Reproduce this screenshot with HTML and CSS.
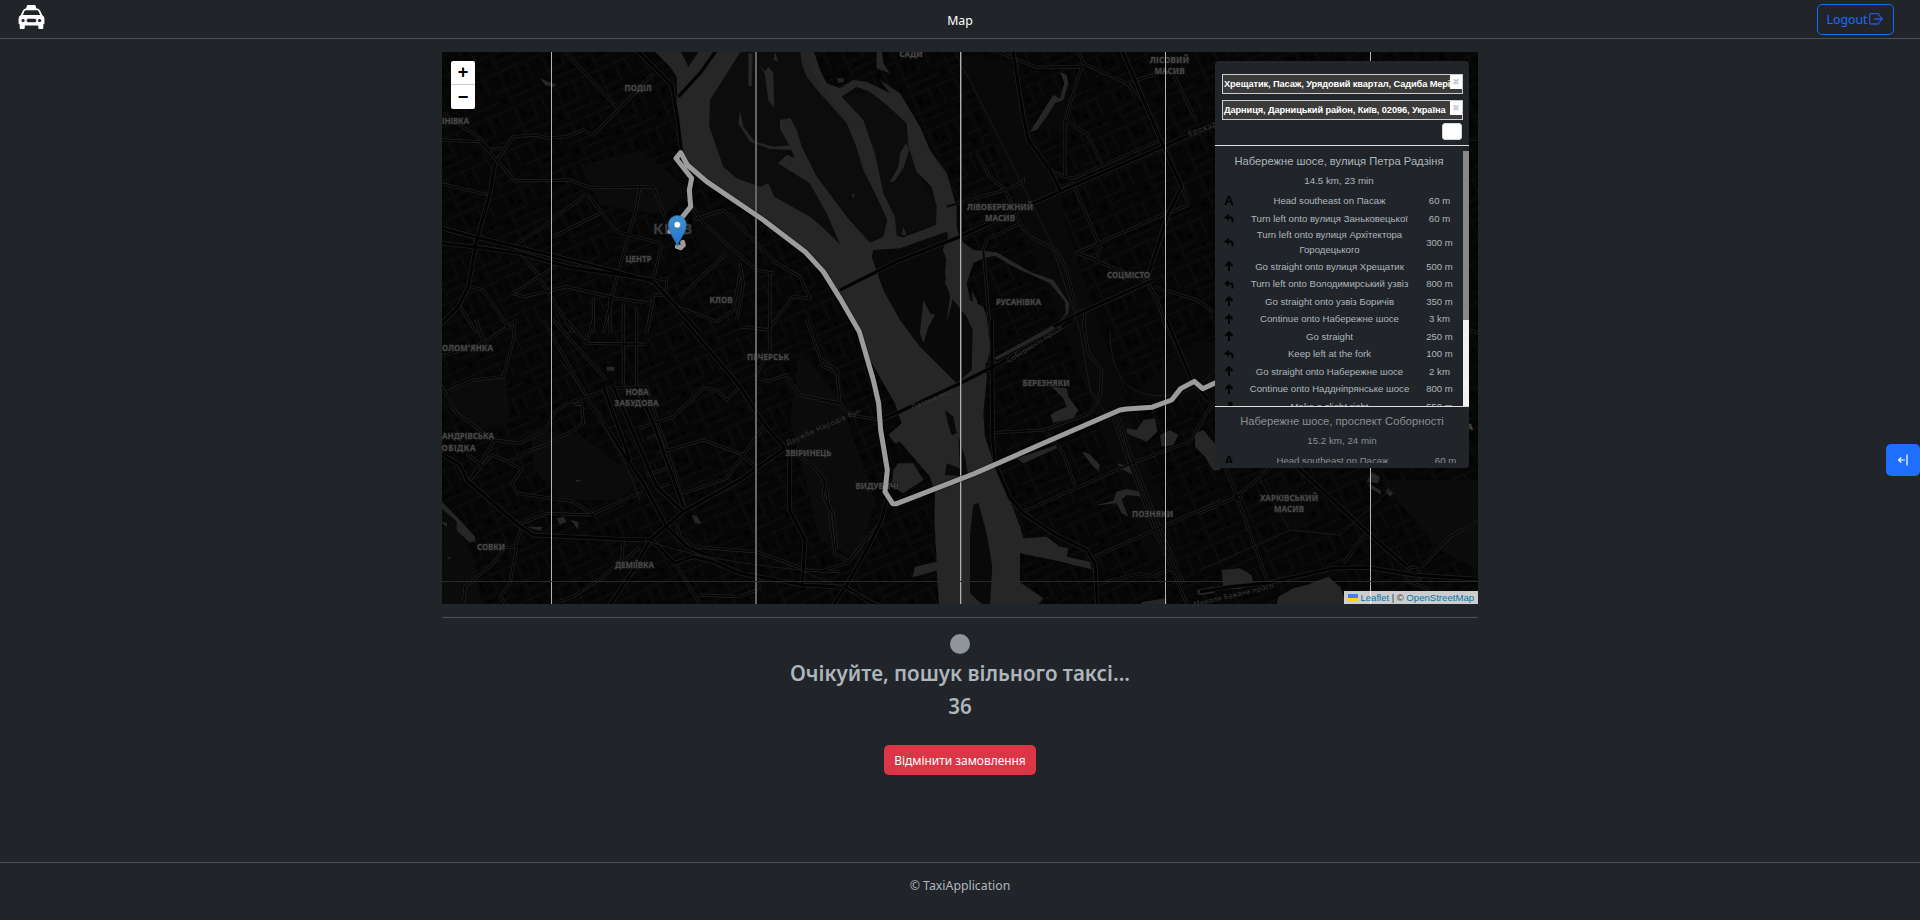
FILE: index.html
```html
<!DOCTYPE html>
<html lang="uk">
<head>
<meta charset="utf-8">
<title>Map</title>
<link rel="stylesheet" href="styles.css">
</head>
<body>
<header class="navbar">
  <a class="brand" href="#" aria-label="Taxi">
    <svg width="27" height="25" viewBox="0 0 24 25" preserveAspectRatio="none"><path fill="#fff" fill-rule="evenodd" d="M8 .5Q8 0 8.500 0H15q.5 0 .6.5L16.300 3.300Q18.800 3.600 19.600 5.500L21.500 10Q23.500 11 23.500 14V18.500L22.500 19.500V23q0 1-1 1H19q-1 0-1-1V20.500H6V23q0 1-1 1H2.500q-1 0-1-1V19.500L.5 18.500V14q0-3 2-4L4.400 5.500Q5.200 3.600 7.300 3.300ZM6.800 5.300Q6 5.400 5.600 6.500L4.300 10H19.700L18.400 6.500Q18 5.400 17.200 5.300ZM4.500 14a1.500 1.500 0 1 0 0 3 1.500 1.500 0 0 0 0-3ZM19.200 14a1.500 1.500 0 1 0 0 3 1.500 1.500 0 0 0 0-3ZM8.500 13.800L7.500 15.500 8.500 17.200H15.500L16.500 15.500 15.500 13.800Z"/></svg>
  </a>
  <span class="nav-title">Map</span>
  <a class="logout" href="#"><span>Logout</span>
    <svg width="15" height="12" viewBox="0 0 15 12" fill="none" stroke="#2455d6" stroke-width="1.300"><path d="M10 3.500V2Q10 .7 8.700 .7H2Q.7 .7 .7 2V9.700Q.7 11 2 11H8.700Q10 11 10 9.700V8.300M5 6H13.500M11 3.500L13.500 6L11 8.500"/></svg>
  </a>
</header>

<main class="content">
  <section class="map">
    <svg class="tiles" width="1036" height="552" viewBox="442 52 1036 552">
      <defs>
        <pattern id="trees" width="3" height="3" patternUnits="userSpaceOnUse"><path d="M0 .5H1M1.500 2H2.500" stroke="#111" stroke-width="1"/></pattern>
        <pattern id="blocks" width="46" height="38" patternUnits="userSpaceOnUse" patternTransform="rotate(-24)"><path d="M0 3H46M0 22H30M12 3V38M30 0V22M41 3V22M12 31H46" stroke="#121212" stroke-width=".8" fill="none"/><path d="M3 7h5v2h-5zM16 7h3v8h-3zM23 14h4v3h-4zM34 8h4v3h-4zM17 26h7v2h-7zM33 26h3v4h-3zM3 28h4v5h-4z" fill="#020202"/></pattern>
        <g id="main-roads" fill="none" stroke-linejoin="round">
          <g transform="translate(440 50) scale(.33333)">
            <path d="M0 533L100 560 310 610 530 665 640 695M0 580L100 590 240 610 380 650 640 690M165 340L150 430 110 570 85 710 55 770 0 825M640 695L700 760 780 850M590 0L695 105 712 200 725 310"/>
            <path d="M830 0L780 70 715 140"/>
          </g>
          <g transform="translate(440 320) scale(.33333)">
            <path d="M730 0L900 200 970 310 1035 385M1035 385L900 480 730 575 630 660 580 750 510 855M0 400L60 435 80 480 235 615 280 645 550 658 635 660 705 730 760 710 820 725 900 760 1090 795 1200 800M1048 385V570L1095 660 1087 800M440 235L570 430 610 490 680 620 740 680 800 705"/>
            <path d="M490 200L570 420M520 200L650 500 730 575M590 200L640 310 730 560"/>
          </g>
          <g transform="translate(820 50) scale(.33333)">
            <path d="M60 720L230 635 420 560 640 460 730 420 1030 290 1200 215M578 0L610 200 625 270 690 360 720 420M905 0L945 90 1030 290 1085 410 1045 490 980 690M1000 690L790 785 700 830"/>
          </g>
          <g transform="translate(820 320) scale(.33333)">
            <path d="M180 300L240 275 420 190 540 130 760 0M200 540L185 600 140 690 80 795 40 855M0 798L80 803 160 852M515 0L518 360 525 430 570 535 610 580 700 640 800 690 825 730 832 852M1040 0L1115 180 1165 240"/>
          </g>
          <g transform="translate(1200 450) scale(.33333)">
            <path d="M0 425L90 410 200 400 400 355 500 352 640 375 840 388M290 50L500 245 620 350"/>
          </g>
        </g>
        <g id="side-roads" fill="none" stroke-linejoin="round">
          <g transform="translate(440 50) scale(.33333)">
            <path d="M0 270L120 275 170 330 225 393 390 390 450 413 640 410 675 500M0 185L120 265 150 300 190 295M165 340L220 260 290 255 320 265 380 260 430 240 460 255 640 70M370 0L530 170M0 400L145 435M440 430L530 545 665 580M340 560L480 490M230 600V580L310 530 440 430M600 410L590 470 535 665 490 850M665 580L640 690M640 695L680 685 680 735 640 735M240 610L290 670 400 850M220 730L360 640M220 730L250 740 380 710 530 745 630 760M90 710L130 720 210 840M60 770L110 850M460 740V850M510 740V850M550 760V850M590 770V850M640 740L620 850M760 510L850 480 900 530 960 590 1010 640 1080 680 1110 745 1060 740 990 830M740 440L780 510 880 600 950 660 1000 670M860 610L720 740M900 640L910 700 890 810M710 770L830 815 880 780 900 670M990 670V840"/>
          </g>
          <g transform="translate(440 320) scale(.33333)">
            <path d="M110 0L130 70 0 110M225 0L220 60 190 170 100 180 20 215M230 0L130 70M0 190L50 280 160 360 240 370 320 330 340 280 380 250 520 205 620 200 740 575M310 0L440 230M340 0L500 180M380 0L440 70 620 73M440 70L460 0M550 0V200M590 0V200M400 255L425 250 430 310 400 330 320 375 270 390 205 425 155 405 90 480M205 425L245 450 215 490 235 520 400 545 460 585M235 615L320 580 450 585 610 515M165 360L90 480M80 400L130 440M180 685L225 680 245 620M190 690L150 740 75 800 70 855M230 680L210 790 180 830 200 855M600 325L700 290 790 205 830 210 860 240 900 200M650 400L790 360 900 400 945 440M730 520L860 475 970 320M620 355L650 345M620 465L680 445M650 505L690 490M945 170L980 185 1040 165 1080 225 1200 250M990 0V90L945 170M900 20L990 30M1100 0L1150 140 1200 160M1060 400L1110 430 1155 480 1150 530 1180 580 1190 690M710 610L720 650 760 680 950 695 1100 750 1200 755M550 660L545 720 490 770 400 830 340 850M705 730L780 852M780 825L900 830 950 810 970 775M600 680L545 730"/>
          </g>
          <g transform="translate(820 50) scale(.33333)">
            <path d="M520 0L650 52 785 50M775 0L790 40 920 100 1000 75M920 100L970 150 1030 290M785 50L735 210 735 380 690 360M735 210L800 250 845 340M735 380L760 385 1020 270M720 420L760 400 840 590 830 630 770 608 1040 490M770 608L980 695M1085 410L1105 465 1045 490M1060 70L1130 215M470 310L510 380 555 420 590 490 600 520 630 560 710 600 740 660 770 780 795 785 790 840M380 470L555 420 610 395M610 395V380M600 520L500 570 490 600 510 840M980 695L1010 740 1040 840M1000 710L1130 750 1180 785"/>
          </g>
          <g transform="translate(820 320) scale(.33333)">
            <path d="M0 240L60 250 90 285 180 300M0 115L50 150 60 250M0 460L20 510 45 700 90 730M0 755L80 730 180 610M790 0L805 100 845 150 840 230 810 280 670 330 520 338M500 155V130L540 130M610 575L935 430 1110 365 1180 245M680 340L730 400 770 510M825 710L1005 630 1200 545M880 290L910 380 1000 620 1070 780 1100 852M895 290L930 400 1010 600 1090 790M840 790L960 760 1000 770 1060 745"/>
          </g>
          <g transform="translate(1200 450) scale(.33333)">
            <path d="M0 190L110 140 215 50M75 50L110 140 205 400M640 400L690 420M840 210L750 260 665 350M840 -350L810 -360M500 245L430 340"/>
            <circle cx="640" cy="375" r="24"/><circle cx="114" cy="142" r="8"/>
          </g>
        </g>
      </defs>
      <rect x="442" y="52" width="1036" height="552" fill="#060606"/>
      <rect x="442" y="52" width="1036" height="552" fill="url(#blocks)"/>
      <g fill="#090909">
        <path id="park1" d="M580 165L640 150 690 190 665 215 600 205ZM450 385L505 375 510 420 480 430 450 410ZM530 430L580 435 640 480 620 500 560 500 535 470ZM800 350L840 400 875 500 860 560 820 540 790 420ZM690 205L750 215 740 270 700 250ZM960 55L1010 60 1180 560 1150 560ZM1380 480L1478 480 1478 570 1440 550ZM1280 480L1320 500 1300 530 1270 520ZM1180 350L1215 340V400L1130 400ZM442 500L475 560 480 604 442 604ZM1070 90L1070 130 1030 130Z"/>
      </g>
      <path d="M580 165L640 150 690 190 665 215 600 205ZM450 385L505 375 510 420 480 430 450 410ZM530 430L580 435 640 480 620 500 560 500 535 470ZM800 350L840 400 875 500 860 560 820 540 790 420ZM1380 480L1478 480 1478 570 1440 550ZM442 500L475 560 480 604 442 604Z" fill="url(#trees)"/>

      <g transform="translate(440 50) scale(.33333)">
        <path fill="#262626" d="M640 0L690 50 710 80 712 200 725 270 735 330 800 395 970 510 1095 605 1150 665 1200 745 1265 840 1290 930 1365 1060 1385 1120 1345 1155 1365 1180 1380 1175 1470 1280 1485 1330 1483 1410 1490 1535 1425 1550 1418 1582 1490 1562 1497 1662H1795L1810 1645 1740 1597 1740 1510 1840 1530 1955 1558 1950 1535 1880 1520 1885 1495 1860 1490 1820 1460 1750 1465 1740 1430 1710 1350 1675 1280 1655 1220 1635 1160 1630 1090 1640 990V940L1652 900 1640 800 1630 770 1590 750 1580 700 1600 640 1630 625 1665 617 1720 650 1830 700 1875 755 1877 790 1840 840 1670 930 1660 925 1860 815 1885 790 1888 760 1840 690 1770 665 1670 607 1600 600 1560 570 1550 530V470L1520 370 1470 300 1440 230 1380 130 1320 90 1350 130 1280 95 1240 90 1200 115 1160 100 1140 60 1120 0Z"/>
        <g fill="#090909">
          <path id="isle-a" d="M905 0L810 150 808 230 850 350 890 385 960 410 985 400 1003 440 1110 500 1140 525 1200 582 1195 545 1160 490 1110 400 1015 340 1040 315 1065 325 1050 290 1020 235 1020 210 1050 205 1070 240 1085 290 1130 380 1220 500 1250 550 1290 578 1330 560 1342 510 1310 440 1270 360 1245 280 1220 220 1140 130 1100 80 1085 40 1080 0Z"/>
          <path id="isle-b" d="M1205 140L1250 110 1290 125 1340 165 1400 220 1405 290 1430 365 1475 410 1490 470 1488 525 1390 562 1370 557 1365 500 1330 430 1305 310 1270 210Z"/>
          <path d="M1300 600L1380 595 1450 570 1520 545 1525 560 1508 600 1525 640 1515 700 1540 750 1580 800 1598 840 1595 960 1550 1000 1440 890 1380 810 1330 720 1295 620ZM1515 1080L1540 1100 1550 1150 1535 1155 1525 1125ZM1555 1160L1575 1220 1585 1280 1515 1275 1520 1240 1560 1255ZM1600 1365L1615 1358 1640 1450 1657 1550 1650 1662H1625L1590 1630 1590 1450ZM720 0H780L745 50ZM1355 1240L1400 1240 1460 1285 1390 1330 1360 1290Z"/>
        </g>
        <g fill="url(#trees)">
          <path d="M905 0L810 150 808 230 850 350 890 385 960 410 985 400 1003 440 1110 500 1140 525 1200 582 1195 545 1160 490 1110 400 1015 340 1050 290 1020 235 1020 210 1050 205 1130 380 1290 578 1330 560 1342 510 1220 220 1080 0ZM1205 140L1290 125 1400 220 1430 365 1490 470 1488 525 1370 557 1270 210Z"/>
        </g>
        <g fill="#262626">
          <path d="M1020 210L1050 205 1070 240 1085 290 1130 380 1220 500 1290 578 1200 582 1160 490 1110 400 1015 340 1040 315 1065 325 1050 290 1020 235Z"/>
          <path d="M925 10H938L935 110 925 105ZM955 35L975 75 985 150 1003 175 1000 70 985 50 975 65ZM1005 5L1015 35 1000 30ZM900 180L910 230 945 275 1000 290 1060 285 1050 300 990 297 930 275 895 220ZM1310 0H1325L1330 40 1350 70 1310 55ZM1398 280L1380 310 1375 350 1350 395 1362 395 1390 355 1408 300ZM1390 530L1400 555 1385 555ZM1520 620L1540 690 1560 750 1540 740 1520 820 1530 740 1515 670ZM1450 750L1470 790 1485 795 1465 830 1450 880 1440 850ZM1595 720L1615 760 1600 765ZM1235 430L1245 435 1240 445ZM1190 85H1210L1212 95 1195 98Z"/>
          <path d="M1860 65L1880 75 1885 100 1870 150 1845 160 1820 200 1790 240 1770 245 1780 230 1830 150 1840 135 1860 145 1873 100ZM300 85L350 105 340 112 315 105Z"/>
          <path d="M1375 1240L1395 1240 1420 1240 1450 1290 1390 1330 1355 1310 1360 1260ZM1835 1010L1880 1015 1885 1040 1915 1080 1900 1105 1840 1118 1832 1095 1845 1085 1880 1070 1870 1045ZM1730 1225L1850 1185 1850 1195 1750 1240ZM1925 1205L1945 1210 1980 1245 1975 1262 1960 1250ZM2060 1135L2090 1140 2110 1110 2145 1105 2152 1145 2120 1175 2060 1150ZM2160 1155L2190 1140 2215 1155 2200 1185 2165 1190ZM2265 1150L2290 1140 2340 1200V1260L2320 1262 2295 1220 2265 1190ZM2030 1325L2060 1317 2100 1325 2110 1340 2060 1335 2045 1350 2065 1400 2045 1390 2030 1360 1960 1367 2020 1352ZM2030 1240L2075 1250 2080 1275 2050 1260ZM2270 1620L2320 1610 2320 1630 2275 1635ZM2110 1655L2180 1645 2180 1662H2100Z"/>
          <path d="M2345 1560L2400 1555 2435 1575 2440 1600 2400 1618 2350 1615ZM2280 1620L2320 1610 2322 1630 2280 1635ZM2510 1662L2515 1640 2560 1615 2600 1605 2665 1580 2700 1610 2720 1662ZM2780 1295L2795 1267 2820 1280 2815 1300ZM2785 1300L2820 1320 2825 1335 2790 1315ZM2835 1325L2845 1315 2860 1330 2850 1340Z"/>
          <path d="M0 1350L60 1410 105 1460 105 1475 85 1475 50 1440 50 1415 0 1370ZM0 1415L22 1418 20 1430ZM20 1525L35 1518 25 1530ZM350 1405L370 1400 380 1415 360 1425ZM260 1430L310 1430 300 1442ZM390 1410L415 1415 415 1440 400 1420ZM755 1395L770 1398 785 1420 765 1420ZM500 950L525 950 522 962 500 962ZM405 1288L425 1292 410 1296Z"/>
        </g>
      </g>

      <use href="#side-roads" stroke="#232323" stroke-width="9"/>
      <use href="#side-roads" stroke="#050505" stroke-width="5"/>
      <use href="#main-roads" stroke="#212121" stroke-width="13"/>
      <use href="#main-roads" stroke="#020202" stroke-width="9"/>
      <g fill="none" stroke="#191919" stroke-width="1">
        <path d="M955 52L1005 150 1050 240 1080 330 1090 390 1110 420M560 360Q620 440 640 500M645 540Q700 560 800 570L880 604M1110 330Q1110 390 1150 395T1215 370M1260 480L1290 530 1340 535 1390 490M1200 570L1290 530M1370 150L1478 140"/>
      </g>

      <g class="labels" text-anchor="middle">
        <text x="638" y="90.500" textLength="27">ПОДІЛ</text>
        <text x="455.500" y="124" textLength="27">ІНІВКА</text>
        <text class="city" x="672.500" y="233.500" textLength="39">КИЇВ</text>
        <text x="638.500" y="262" textLength="26">ЦЕНТР</text>
        <text x="721" y="303" textLength="23">КЛОВ</text>
        <text x="467.500" y="351" textLength="51">ОЛОМ'ЯНКА</text>
        <text x="768" y="360" textLength="42">ПЕЧЕРСЬК</text>
        <text x="637" y="394.500" textLength="23">НОВА</text>
        <text x="636.500" y="405.500" textLength="44">ЗАБУДОВА</text>
        <text x="468" y="439" textLength="52">АНДРІВСЬКА</text>
        <text x="458.500" y="450.500" textLength="34">ОБІДКА</text>
        <text x="808.500" y="456" textLength="46">ЗВІРИНЕЦЬ</text>
        <text x="491" y="550" textLength="28">СОВКИ</text>
        <text x="634.500" y="567.500" textLength="39">ДЕМІЇВКА</text>
        <text x="877" y="488.500" textLength="43">ВИДУБИЧІ</text>
        <text x="911" y="57" textLength="23">САДИ</text>
        <text x="1169.500" y="63" textLength="39">ЛІСОВИЙ</text>
        <text x="1169.500" y="74" textLength="30">МАСИВ</text>
        <text x="1000" y="209.500" textLength="66">ЛІВОБЕРЕЖНИЙ</text>
        <text x="1000" y="220.500" textLength="30">МАСИВ</text>
        <text x="1018.500" y="305" textLength="45">РУСАНІВКА</text>
        <text x="1128.500" y="277.500" textLength="43">СОЦМІСТО</text>
        <text x="1046" y="385.500" textLength="47">БЕРЕЗНЯКИ</text>
        <text x="1152.500" y="517" textLength="41">ПОЗНЯКИ</text>
        <text x="1289" y="500.500" textLength="58">ХАРКІВСЬКИЙ</text>
        <text x="1289" y="511.500" textLength="30">МАСИВ</text>
        <text x="1470" y="430" textLength="6">А</text>
      </g>
      <g class="street-names" text-anchor="middle">
        <text transform="translate(824 429) rotate(-24)" textLength="80">Дружби Народів бул</text>
        <text transform="translate(933 401) rotate(-23)" textLength="44">Патона міст</text>
        <text transform="translate(1036 346) rotate(-32)" textLength="64">Соборності просп</text>
        <text transform="translate(1203 131) rotate(-20)" textLength="30">Бровар</text>
        <text transform="translate(1235 597) rotate(-13)" textLength="84">Миколи Бажана просп.</text>
      </g>

      <g shape-rendering="crispEdges">
        <path fill="#b5b5b5" d="M551 52h1V604h-1zM1165 52h1V604h-1zM1370 52h1V604h-1z"/>
        <path fill="#666" d="M755 52h2V604h-2z"/>
        <path fill="#b0b0b0" d="M960 52h1V604h-1z"/>
        <path fill="#4a4a4a" d="M961 52h1V604h-1z"/>
        <path fill="#292929" d="M442 581H1478v1H442z"/>
      </g>

      <g transform="translate(440 50) scale(.33333)" fill="none" stroke-linejoin="round" stroke-linecap="round">
        <path stroke="#000" stroke-opacity=".2" stroke-width="22" d="M712 590L722 593 730 585 728 577M728 500L752 470 748 420 755 385 708 325 722 308 742 345 800 395 970 510 1095 605 1150 665 1200 745 1258 845 1300 990 1316 1060 1322 1140 1342 1260 1335 1325 1358 1361 1370 1361 1600 1272 1810 1180 2040 1080 2060 1077 2135 1072 2195 1050 2222 1016 2263 994 2288 1016 2340 992"/>
        <path stroke="#9c9c9c" stroke-width="15" d="M712 590L722 593 730 585 728 577M690 545L728 500 752 470 748 420 755 385 708 325 722 308 742 345 800 395 970 510 1095 605 1150 665 1200 745 1258 845 1300 990 1316 1060 1322 1140 1342 1260 1335 1325 1358 1361 1370 1361 1600 1272 1810 1180 2040 1080 2060 1077 2135 1072 2195 1050 2222 1016 2263 994 2288 1016 2340 992"/>
      </g>
      <linearGradient id="pin" x1="0" y1="0" x2="0" y2="1"><stop stop-color="#4391cd"/><stop offset="1" stop-color="#2273ca"/></linearGradient>
      <path fill="url(#pin)" stroke="#2d74ad" stroke-width=".7" d="M677.300 246.500C676 240 668.300 233 668.300 224.500a9 9 0 0 1 18 0C686.300 233 678.600 240 677.300 246.500Z"/>
      <circle cx="677.300" cy="224.800" r="3.300" fill="#fff" stroke="#2d74ad" stroke-width=".6"/>
    </svg>

    <div class="zoom-control"><button class="zoom-btn">+</button><button class="zoom-btn">−</button></div>

    <aside class="routing">
      <div class="waypoints">
        <div class="waypoint"><span class="place">Хрещатик, Пасаж, Урядовий квартал, Садиба Мері</span><button class="remove">✖</button></div>
        <div class="waypoint"><span class="place">Дарниця, Дарницький район, Київ, 02096, Україна</span><button class="remove">✖</button></div>
        <button class="add" aria-label="Add"></button>
      </div>
      <div class="route">
        <div class="route-body">
          <h2 class="route-name">Набережне шосе, вулиця Петра Радзіня</h2>
          <h3 class="route-sum">14.5 km, 23 min</h3>
          <div class="step"><b class="ico depart">A</b><span>Head southeast on Пасаж</span><span>60 m</span></div>
          <div class="step"><svg class="ico" viewBox="0 0 10 10"><use href="#left"/></svg><span>Turn left onto вулиця Заньковецької</span><span>60 m</span></div>
          <div class="step double"><svg class="ico" viewBox="0 0 10 10"><use href="#left"/></svg><span>Turn left onto вулиця Архітектора<br>Городецького</span><span>300 m</span></div>
          <div class="step"><svg class="ico" viewBox="0 0 10 10"><use href="#up"/></svg><span>Go straight onto вулиця Хрещатик</span><span>500 m</span></div>
          <div class="step"><svg class="ico" viewBox="0 0 10 10"><use href="#left"/></svg><span>Turn left onto Володимирський узвіз</span><span>800 m</span></div>
          <div class="step"><svg class="ico" viewBox="0 0 10 10"><use href="#up"/></svg><span>Go straight onto узвіз Боричів</span><span>350 m</span></div>
          <div class="step"><svg class="ico" viewBox="0 0 10 10"><use href="#up"/></svg><span>Continue onto Набережне шосе</span><span>3 km</span></div>
          <div class="step"><svg class="ico" viewBox="0 0 10 10"><use href="#up"/></svg><span>Go straight</span><span>250 m</span></div>
          <div class="step"><svg class="ico" viewBox="0 0 10 10"><use href="#left"/></svg><span>Keep left at the fork</span><span>100 m</span></div>
          <div class="step"><svg class="ico" viewBox="0 0 10 10"><use href="#up"/></svg><span>Go straight onto Набережне шосе</span><span>2 km</span></div>
          <div class="step"><svg class="ico" viewBox="0 0 10 10"><use href="#up"/></svg><span>Continue onto Наддніпрянське шосе</span><span>800 m</span></div>
          <div class="step"><svg class="ico" viewBox="0 0 10 10"><use href="#slight"/></svg><span>Make a slight right</span><span>550 m</span></div>
        </div>
        <div class="scrollbar"><div class="thumb"></div></div>
      </div>
      <div class="route alt">
        <div class="route-body">
          <h2 class="route-name">Набережне шосе, проспект Соборності</h2>
          <h3 class="route-sum">15.2 km, 24 min</h3>
          <div class="step"><b class="ico depart">A</b><span>Head southeast on Пасаж</span><span>60 m</span></div>
        </div>
      </div>
    </aside>
    <div class="attribution"><svg width="10" height="7" viewBox="0 0 10 7"><path fill="#4c7be1" d="M0 0h10v4H0z"/><path fill="#ffd500" d="M0 4h10v3H0z"/></svg><a>Leaflet</a><span>|</span><span>©</span><a>OpenStreetMap</a></div>
  </section>
  <section class="status">
    <div class="spinner"></div>
    <p class="status-text">Очікуйте, пошук вільного таксі...</p>
    <p class="status-text">36</p>
    <button class="cancel">Відмінити замовлення</button>
  </section>
</main>
<footer class="footer">© TaxiApplication</footer>
<button class="drawer" aria-label="Open"><svg width="10" height="12" viewBox="0 0 10 12" fill="none" stroke="#fff"><path d="M7 6H.8M3.300 3.300L.7 6L3.300 8.700M9 .5V11.500" stroke-width="1.200"/></svg></button>
<svg class="symbols" width="0" height="0"><defs>
  <g id="up"><path d="M5 10V3M1.500 5L5 1.200 8.500 5" fill="none" stroke="#000" stroke-width="1.900"/></g>
  <g id="left"><path d="M8.500 9.500V6.500Q8.500 4.500 6.500 4.500H3" fill="none" stroke="#000" stroke-width="1.900"/><path d="M4.500 .8V8.200L.3 4.500Z"/></g>
  <g id="slight"><path d="M3 1H8.500V6.500Z"/><path d="M3 9V7L7 3" stroke="#000" stroke-width="2" fill="none"/></g>
</defs></svg>
</body>
</html>
```
FILE: styles.css
```css
* { box-sizing: border-box; }
body {
  margin: 0;
  height: 920px;
  overflow: hidden;
  display: flex;
  flex-direction: column;
  background: #212529;
  color: #adb5bd;
  font: 12.300px "Noto Sans", sans-serif;
}
button { font: inherit; border: 0; padding: 0; }
.navbar {
  height: 39px;
  border-bottom: 1px solid #4d5154;
  display: grid;
  grid-template-columns: 1fr auto 1fr;
  align-items: center;
  padding: 0 26px;
}
.brand { display: block; height: 25px; margin: -4px 0 0 -8px; }
.nav-title { color: #fff; margin-top: 2px; }
.logout {
  justify-self: end;
  width: 77px;
  height: 31px;
  display: flex;
  align-items: center;
  justify-content: center;
  gap: 2px;
  border: 1px solid #0d6efd;
  border-radius: 5px;
  color: #1a6dff;
  text-decoration: none;
}
.content { width: 1036px; margin: 13px auto 0; flex: 1; }
.map { position: relative; height: 552px; overflow: hidden; background: #060606; }
.tiles { display: block; }
.labels text {
  font: 700 8px "Noto Sans", sans-serif;
  fill: #484848;
  stroke: #171717;
  stroke-width: 1.5px;
  paint-order: stroke;
}
.labels .city { font-size: 15px; font-weight: 600; fill: #3d3d3d; }
.street-names text { font: 7px "Noto Sans", sans-serif; fill: #3a3a3a; }

.zoom-control { position: absolute; left: 9px; top: 9px; width: 24px; }
.zoom-btn {
  display: block;
  width: 24px;
  height: 24px;
  background: #fff;
  color: #000;
  font: bold 18px/23px "Liberation Sans", sans-serif;
  border-radius: 0 0 2px 2px;
}
.zoom-btn:first-child { border-bottom: 1px solid #ccc; border-radius: 2px 2px 0 0; }

.routing {
  position: absolute;
  left: 773px;
  top: 9px;
  width: 254px;
  height: 407px;
  background: #212529;
  border-radius: 4px;
  overflow: hidden;
  display: flex;
  flex-direction: column;
  font: 9.600px/15px "Liberation Sans", Arial, sans-serif;
}
.waypoints { height: 85px; padding: 13px 6px 0 7px; border-bottom: 1px solid #ddd; flex: none; }
.waypoint {
  height: 20px;
  margin-bottom: 6px;
  border: 1px solid #ccc;
  background: #3b3b3b;
  display: flex;
  justify-content: space-between;
  overflow: hidden;
}
.place { color: #fff; font-weight: bold; font-size: 9.250px; line-height: 18px; padding-left: 1px; white-space: nowrap; overflow: hidden; flex: 1; letter-spacing: -.1px; }
.remove { width: 12px; height: 14px; background: #fff; color: #ccc; font: 9px/14px "DejaVu Sans", sans-serif; flex: none; }
.add { display: block; margin: -3px 1px 0 auto; width: 20px; height: 17px; background: #fff; border: 1px solid #d5d9d5; border-radius: 3px; }
.route { height: 261px; padding-top: 5px; display: flex; border-bottom: 1px solid #ddd; flex: none; overflow: hidden; }
.route-body { flex: 1; padding: 0 5px; text-align: center; }
.route-name { font-size: 11.200px; line-height: 20px; font-weight: 400; margin: 0; }
.route-sum { font-size: 9.750px; line-height: 20px; font-weight: 400; margin: 0; }
.step { height: 17.500px; display: grid; grid-template-columns: 18px 1fr 37px; align-items: center; }
.route-sum + .step { margin-top: 1px; }
.double { height: 30.500px; }
.ico { width: 10px; height: 10px; margin-left: 4px; display: block; }
.depart { color: #000; font: 900 13px/10px "Liberation Sans", sans-serif; }
.scrollbar { width: 6px; background: #f1f1f1; }
.thumb { height: 169px; background: #888; }
.alt { height: 56px; padding-top: 4px; border: 0; color: #8a8f92; }
.attribution {
  position: absolute;
  right: 0;
  bottom: 0;
  width: 134px;
  height: 13px;
  background: rgba(255, 255, 255, .8);
  color: #333;
  display: flex;
  align-items: center;
  justify-content: center;
  gap: 2.500px;
  font: 9.600px/13px "Liberation Sans", sans-serif;
}
.attribution a { color: #0078a8; }

.status { margin-top: 13px; border-top: 1px solid #4d5154; display: flex; flex-direction: column; align-items: center; }
.spinner { margin: 16px 0 3px; width: 20px; height: 20px; border-radius: 50%; background: #8f959b; }
.status-text { margin: 0; font-size: 20.600px; font-weight: 600; line-height: 33px; }
.cancel { margin-top: 22px; width: 152px; height: 30px; border-radius: 5px; background: #dc3545; color: #fff; font-size: 12px; letter-spacing: -.05px; white-space: nowrap; }
.footer { height: 58px; border-top: 1px solid #4d5154; text-align: center; line-height: 46px; }
.drawer {
  position: absolute;
  right: 0;
  top: 444px;
  width: 34px;
  height: 32px;
  border-radius: 5px;
  background: #1f6fff;
  display: flex;
  align-items: center;
  justify-content: center;
}
.symbols { position: absolute; }
```
